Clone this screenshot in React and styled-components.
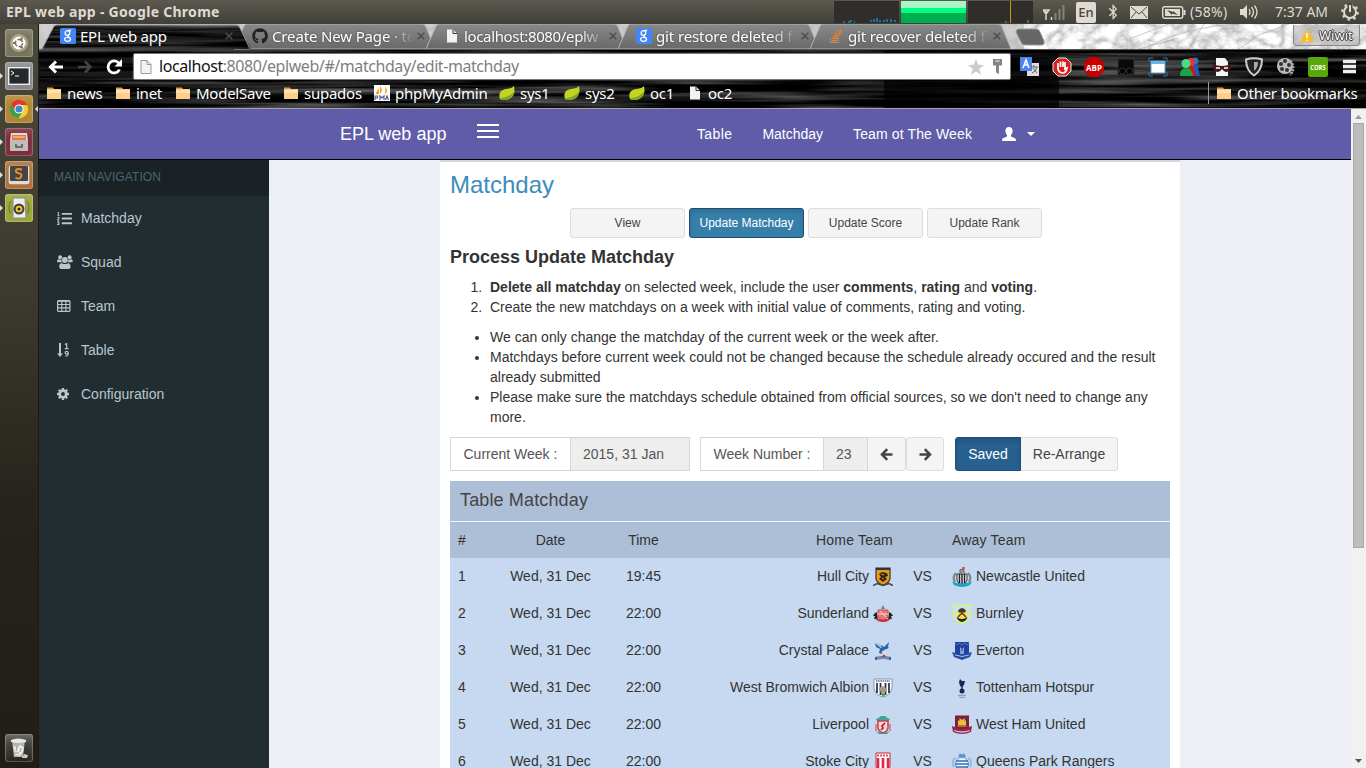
import React from "react";
import styled, { createGlobalStyle, css } from "styled-components";
import { FaListOl, FaGithub, FaBluetoothB } from "react-icons/fa";

const GlobalStyle = createGlobalStyle`
  * { box-sizing: border-box; }
  html, body { margin: 0; height: 100%; overflow: hidden; }
  body { font: 14px/20px "Liberation Sans", Arial, sans-serif; color: #333; }
  svg { display: block; flex: none; }
`;

const uiFont = css`font-family: "Noto Sans", "Open Sans", sans-serif; font-size: 15px; line-height: 20px;`;

const T = styled.span`
  white-space: nowrap;
  letter-spacing: ${(p) => p.$ls || 0}px;
`;

/* ---------- desktop ---------- */
const Desktop = styled.div`
  display: flex; flex-direction: column; width: 1366px; height: 768px; overflow: hidden;
`;
const TopPanel = styled.header`
  ${uiFont}
  height: 24px; display: flex; align-items: center; justify-content: space-between;
  background: linear-gradient(#5c594f, #403f3a); color: #dfdbd2; padding-left: 6px;
`;
const PanelTitle = styled.b`font-size: 14px; font-weight: 700; white-space: nowrap; letter-spacing: ${(p) => p.$ls}px;`;
const Tray = styled.div`display: flex; align-items: center; height: 24px; width: 532px;`;
const Slot = styled.div`
  width: ${(p) => p.$w}px; height: 24px; display: flex; align-items: center; flex: none; font-size: 14px; white-space: nowrap;
  letter-spacing: ${(p) => p.$ls || 0}px; padding-left: ${(p) => p.$pl || 0}px;
`;
const Monitor = styled.div`height: 22px; width: 65px; background: #2f2e2a; margin-right: 2px; flex: none;`;
const LangBox = styled.span`
  background: #dfdbd2; color: #45443e; border-radius: 2px; width: 20px; height: 21px; line-height: 21px; text-align: center; font-size: 13px; font-weight: 500;
`;
const Below = styled.div`display: flex; flex: 1; min-height: 0;`;

const Launcher = styled.aside`
  width: 39px; padding: 5px 0 6px 0; display: flex; flex-direction: column; gap: 5px; flex: none;
  background: linear-gradient(#4a483b, #3d3a30 35%, #26231c 65%, #211e18); border-right: 1px solid #1b1a16;
`;
const LaunchRow = styled.div`
  display: flex; align-items: center; height: 28px; gap: 2px;
  margin-top: ${(p) => (p.$last ? "auto" : 0)};
`;
const Pip = styled.i`
  width: 3px; height: 6px; flex: none; background: ${(p) => (p.$on ? "#ddd" : "transparent")};
  clip-path: ${(p) => (p.$right ? "polygon(100% 0, 0 50%, 100% 100%)" : "polygon(0 0, 100% 50%, 0 100%)")};
`;
const Tile = styled.div`
  width: 28px; height: 28px; border-radius: 3px; flex: none; background: ${(p) => p.$bg};
  box-shadow: inset 0 0 0 1px rgba(255,255,255,.22), inset 0 5px 6px rgba(255,255,255,.15);
  display: flex; align-items: center; justify-content: center;
`;

/* ---------- browser ---------- */
const Browser = styled.main`flex: 1; min-width: 0; display: flex; flex-direction: column;`;
const Chrome = styled.div`position: relative; height: 85px; flex: none; color: #fff; background: #0c0c0c; border-bottom: 1px solid #a3a3a3; ${uiFont}`;
const Backdrop = styled.svg`position: absolute; left: 0; top: 0;`;
const TabStrip = styled.div`position: relative; display: flex; height: 25px; padding-left: 9px; align-items: center;`;
const Tab = styled.div`width: 192px; padding: 0 0 1px 12px; display: flex; align-items: center; height: 25px;`;
const TabIcon = styled.span`width: 20px; display: flex;`;
const TabText = styled.span`
  width: 145px; white-space: nowrap; letter-spacing: ${(p) => p.$ls || 0}px; text-shadow: 0 0 2px rgba(0,0,0,.5);
  ${(p) => p.$fade && css`mask-image: linear-gradient(90deg, #000 115px, transparent 141px);`}
`;
const TabClose = styled.span`width: 8px;`;
const WindowUser = styled.div`
  margin-left: auto; margin-right: 6px; width: 67px; height: 21px; margin-bottom: 2px; border: 1px solid #888; border-top: 0; border-radius: 0 0 4px 4px;
  background: rgba(180,180,180,.6); display: flex; align-items: center; gap: 5px; padding-left: 6px; font-size: 13px;
  text-shadow: 1px 0 #333, -1px 0 #333, 0 1px #333, 0 -1px #333;
`;
const Toolbar = styled.div`position: relative; display: flex; align-items: center; height: 34px; padding: 1px 0 0 9px;`;
const NavIcons = styled.div`display: flex; width: 85px; gap: 13px; flex: none;`;
const Omnibox = styled.div`
  width: 878px; flex: none; height: 27px; background: #fff; border: 1px solid #777; border-radius: 2px; color: #808080;
  display: flex; align-items: center; padding: 0 6px 0 4px; font-size: 16px;
`;
const Url = styled.span`flex: 1; padding: 0 0 1px 5px; white-space: nowrap; letter-spacing: ${(p) => p.$ls}px; b { font-weight: 400; color: #111; }`;
const KeyIcon = styled.svg`margin-left: 8px;`;
const Extensions = styled.div`display: flex; gap: 12px; margin-left: 9px;`;
const Bookmarks = styled.div`position: relative; display: flex; align-items: center; height: 20px; padding-left: 7px; letter-spacing: -0.25px;`;
const Bookmark = styled.div`width: ${(p) => p.$w}px; display: flex; align-items: center; gap: 5px; flex: none;`;
const OtherMarks = styled(Bookmark)`margin-left: auto; border-left: 1px solid #99a; padding-left: 7px; height: 22px;`;

/* ---------- page ---------- */
const Viewport = styled.div`flex: 1; display: flex; min-height: 0;`;
const Page = styled.div`flex: 1; display: flex; flex-direction: column; min-width: 0; background: #ecf0f5;`;
const Navbar = styled.nav`
  height: 51px; flex: none; background: #605ca8; border-bottom: 1px solid #000; color: #fff; display: flex; align-items: center; padding: 0 316px 0 301px;
`;
const Brand = styled.span`font-size: 18px; width: 137px; white-space: nowrap;`;
const Burger = styled.div`width: 22px; display: grid; gap: 4px; margin-top: -6px; i { height: 2px; background: #fff; }`;
const Links = styled.div`display: flex; gap: 30px; margin-left: auto; align-items: center;`;
const UserMenu = styled.div`display: flex; gap: 11px; align-items: center;`;
const Columns = styled.div`display: flex; flex: 1; min-height: 0; overflow: hidden;`;
const Sidebar = styled.aside`width: 230px; background: #222d32; color: #b8c7ce; flex: none;`;
const SideTitle = styled.div`height: 36px; background: #1a2226; color: #4b646f; font-size: 12px; line-height: 34px; padding-left: 15px; letter-spacing: 0.1px;`;
const SideItem = styled.div`height: 44px; display: flex; align-items: center; padding-left: 18px;`;
const SideIcon = styled.span`width: 24px; display: flex;`;
const Content = styled.section`
  margin-left: 171px; width: 740px; height: 640px; background: #fff; border-top: 2px solid #d2d6de; padding: 10px 10px 0;
`;
const Heading = styled.h1`font-size: 24px; line-height: 26px; font-weight: 400; color: #3c8dbc; margin: 0 0 10px;`;
const SubHeading = styled.h2`font-size: 18px; line-height: 20px; margin: 9px 0 10px;`;
const Tabs = styled.div`display: flex; justify-content: center; gap: 4px; padding-right: 8px;`;
const PillButton = styled.button`
  font: 12px "Liberation Sans", Arial, sans-serif; width: 115px; height: 30px; border-radius: 3px; padding: 0; white-space: nowrap;
  background: ${(p) => (p.$active ? "#367fa9" : "#f4f4f4")}; color: ${(p) => (p.$active ? "#fff" : "#444")};
  border: 1px solid ${(p) => (p.$active ? "#204d74" : "#ddd")};
  box-shadow: ${(p) => (p.$active ? "inset 0 3px 5px rgba(0,0,0,.125)" : "none")};
`;
const listStyle = css`margin: 0 0 10px; padding-left: 40px; li { line-height: 20px; }`;
const Steps = styled.ol`
  ${listStyle}
  li::marker { content: counter(list-item) ". \\2009\\200A"; }
`;
const Notes = styled.ul`${listStyle}`;
const Controls = styled.div`display: flex; height: 34px; margin-bottom: 10px;`;
const Group = styled.div`display: flex; margin-right: ${(p) => p.$mr || 0}px;`;
const Cell = styled.div`
  width: ${(p) => p.$w}px; height: 34px; border: 1px solid #d2d6de; margin-left: ${(p) => (p.$first ? 0 : -1)}px;
  background: ${(p) => (p.$muted ? "#eee" : "#fff")}; color: #555; padding-left: ${(p) => (p.$muted ? 12 : 12.5)}px; line-height: 32px; white-space: nowrap;
`;
const Button = styled.button`
  width: ${(p) => p.$w}px; height: 34px; padding: 0; font: 14px "Liberation Sans", Arial, sans-serif; white-space: nowrap;
  display: flex; align-items: center; justify-content: center;
  background: ${(p) => (p.$active ? "#286090" : "#f4f4f4")}; color: ${(p) => (p.$active ? "#fff" : "#444")};
  border: 1px solid ${(p) => (p.$active ? "#204d74" : "#ddd")}; border-radius: ${(p) => p.$r || "3px"};
  border-left-width: ${(p) => (p.$joined ? 0 : 1)}px;
  box-shadow: ${(p) => (p.$active ? "inset 0 3px 5px rgba(0,0,0,.125)" : "none")};
`;
const TableTitle = styled.div`height: 41px; background: #adbfd6; border-bottom: 1px solid #f4f4f4; font-size: 18px; line-height: 38px; padding-left: 10px; color: #444; letter-spacing: 0.14px;`;
const Row = styled.div`
  display: grid; grid-template-columns: 46px 109px 77px 219px 43px 226px; align-items: center; height: ${(p) => (p.$head ? 36 : 37)}px;
  padding-bottom: ${(p) => (p.$head ? 0 : 1)}px; background: ${(p) => (p.$head ? "#adbfd6" : "#c6d9f1")};
`;
const Col = styled.div`
  padding: 0 8px; display: flex; align-items: center; gap: 4px; white-space: nowrap; letter-spacing: ${(p) => p.$ls || 0}px;
  justify-content: ${(p) => (p.$align === "c" ? "center" : p.$align === "r" ? "flex-end" : "flex-start")};
`;
const Crest = styled.svg.attrs({ width: 20, height: 20, viewBox: "0 0 20 20" })`margin-top: 2px;`;
const Scrollbar = styled.div`width: 15px; background: #f1f1f1; display: flex; flex-direction: column; align-items: center; justify-content: space-between;`;
const ScrollTop = styled.div`display: flex; flex-direction: column; align-items: center;`;
const Thumb = styled.div`width: 11px; height: 425px; background: #bcbcbc; border: 1px solid #a8a8a8;`;

/* ---------- icons ---------- */
const GoogleIcon = () => (
  <svg width="16" height="16" viewBox="0 0 16 16"><rect width="16" height="16" rx="1.5" fill="#4285f4" />
    <g fill="none" stroke="#fff" strokeWidth="1.3"><ellipse cx="7.400" cy="5" rx="2.300" ry="2.300" /><path d="M8 2.500h3.200M8.500 7.200c-2 1 .5 1.600 1.500 2.800M7.500 9.300c-3.800 0-4 4 .1 4 3.800 0 4-4 .2-4z" /></g></svg>
);
const PageIcon = ({ line }) => (
  <svg width="16" height="16" viewBox="0 0 16 16"><path d="M3 1.500h6l4 4v9H3z" fill={line ? "#f4f4f4" : "#f2f2f2"} stroke={line ? "#999" : "none"} /><path d="M9 1.500v4h4" fill="none" stroke={line ? "#999" : "#333"} /></svg>
);
const Stack = () => (
  <svg width="16" height="16" viewBox="0 0 16 16" fill="none"><path d="M2.500 10v4.500h8V10" stroke="#999" /><path d="M4 12.500h5M4.200 10l5 .7M5 7.300l5 2.200M6.800 4.500l4 4M9.500 2l2.600 5M12.500 1l.8 5" stroke="#f0802c" strokeWidth="1.300" /></svg>
);
const CloseX = () => <svg width="8" height="8" viewBox="0 0 8 8"><path d="M.7.7l6.600 6.600M7.300.7L.7 7.300" stroke="#4d4d4d" strokeWidth="1.500" /></svg>;
const Folder = () => (
  <svg width="16" height="16" viewBox="0 0 16 16"><path d="M1 4V2.500h6L8 4h7v9H1z" fill="#d89b45" /><path d="M1 4.500h14V14H1z" fill="#fcd08a" /><path d="M1 4.500h14v3.500H1z" fill="#ffe0ae" /></svg>
);
const Leaf = () => <svg width="16" height="16" viewBox="0 0 16 16"><path d="M1 14C-2 5 6 4 10 3.500Q13 3 15 1c2 8-2 15-12 13.500z" fill="#c2d322" /><path d="M1.500 14.500c7 2 12-1 13.500-8C12 10 8 12.500 2 13z" fill="#7ca62a" /></svg>;
const Pma = () => <svg width="16" height="16" viewBox="0 0 16 16"><rect width="16" height="16" fill="#fff" /><path d="M5 9V3l-3.500 6zM6 9c3-3 1.500-6 0-8zM11 9c3-2 2-5 .5-7z" fill="#f89c0e" /><path d="M1 15v-4h2.500v2H1M6 15v-4l2 2 2-2v4M11.500 15l1.500-4 1.500 4" fill="none" stroke="#555b8c" strokeWidth="1.200" /></svg>;

const tabs = [
  ["EPL web app", <GoogleIcon />, -0.25, 0],
  ["Create New Page · te", <FaGithub size={16} color="#222" />, -0.15, 1],
  ["localhost:8080/eplw", <PageIcon />, -0.35, 1],
  ["git restore deleted f", <GoogleIcon />, -0.12, 1],
  ["git recover deleted f", <Stack />, -0.17, 1],
];
const bookmarks = [
  ["news", 69, <Folder />], ["inet", 60, <Folder />], ["ModelSave", 108, <Folder />], ["supados", 91, <Folder />],
  ["phpMyAdmin", 125, <Pma />], ["sys1", 65, <Leaf />], ["sys2", 65, <Leaf />], ["oc1", 58, <Leaf />], ["oc2", 60, <PageIcon />],
];

const ChromeBackdrop = () => (
  <Backdrop width="1327" height="84" viewBox="0 0 1327 84">
    <defs>
      <filter id="grain" x="0" y="0" width="100%" height="100%" colorInterpolationFilters="sRGB">
        <feTurbulence type="fractalNoise" baseFrequency="0.005 0.17" numOctaves="3" seed="8" />
        <feColorMatrix values=".85 0 0 0 -.33  .85 0 0 0 -.33  .85 0 0 0 -.33  0 0 0 0 1" />
      </filter>
      <filter id="branches" x="0" y="0" width="100%" height="100%">
        <feTurbulence type="turbulence" baseFrequency="0.045 0.06" numOctaves="4" seed="5" />
        <feColorMatrix values="1.200 0 0 0 .45  1.200 0 0 0 .45  1.200 0 0 0 .45  0 0 0 0 1" />
      </filter>
      <linearGradient id="tabFill" x2="0" y2="1"><stop stopColor="#858585" stopOpacity=".94" /><stop offset="1" stopColor="#666" stopOpacity=".97" /></linearGradient>
      <clipPath id="active"><path d="M3 25 L14 4 q1 -3 4 -3 H197 q3 0 4 3 L212 25z" /></clipPath>
    </defs>
    <rect width="1327" height="84" filter="url(#grain)" />
    <rect width="1327" height="25" filter="url(#branches)" />
    <rect width="985" height="25" fill="#bbb" opacity=".7" />
    {[195, 387, 579, 771].map((x) => (
      <path key={x} d={`M${x} 25 L${x + 10} 2 q1 -2 3 -2 H${x + 188} q3 0 4 3 L${x + 201} 25z`} fill="url(#tabFill)" stroke="#b5b5b5" />
    ))}
    <g clipPath="url(#active)"><rect width="1327" height="84" filter="url(#grain)" /></g>
    <path d="M0 25H3L14 4q1-3 4-3H197q3 0 4 3L211 25" fill="none" stroke="#999" />
    <path d="M211 25.500H1327" stroke="#555" />
    <path d="M977 8q0-3 3-3h17q3 0 4 3l4 9q1 4-2 4h-17q-3 0-4-3z" fill="#666" stroke="#999" />
    <path d="M845 26h175v58H845z" fill="#000" opacity=".7" />
    <path d="M0 28h93v26H0z" fill="#000" opacity=".5" />
    <path d="M1090 15l40-15M1110 22q40-20 90-22M1150 25l15-25M1140 14l-40 11M1200 25l20-14 30-11" stroke="#999" fill="none" opacity=".5" />
  </Backdrop>
);

const S = ({ children, s = 20 }) => <svg width={s} height={s} viewBox="0 0 20 20">{children}</svg>;
const extensions = [
  <S key="tr"><rect x="7" y="6" width="12" height="13" fill="#ddd" /><path d="M0 0h12v14H0z" fill="#4a86ee" /><path d="M3 11l3-8 3 8M4 8h4" stroke="#fff" strokeWidth="1.500" fill="none" /><path d="M11 10h7M14 8v2M12 16q4-1 5-6M13 11l4 5" stroke="#666" fill="none" /></S>,
  <S key="hand"><path d="M6 1h8l5 5v8l-5 5H6l-5-5V6z" fill="#d8201f" stroke="#eee" /><path d="M6 8v4q1 4 5 4 3 0 4-5l-2 1V5M6 9V6M8.500 10V4.500M11 10V4.500M13 10V6" stroke="#fff" strokeWidth="1.700" fill="none" /></S>,
  <S key="abp"><path d="M6 0h8l6 6v8l-6 6H6l-6-6V6z" fill="#c80000" /><text x="10" y="13.500" textAnchor="middle" fill="#fff" fontSize="8.500" fontWeight="700" fontFamily="Open Sans, sans-serif" textLength="16" lengthAdjust="spacingAndGlyphs">ABP</text></S>,
  <S key="dark"><path d="M2 2h16v16H2z" fill="#090909" stroke="#333" /><circle cx="6.500" cy="14" r="3" fill="#000" stroke="#333" /><circle cx="13.500" cy="14" r="3" fill="#000" stroke="#333" /></S>,
  <S key="frame"><path d="M1 5V1h4M15 1h4v4M1 15v4h4M15 19h4v-4" stroke="#38709c" fill="none" /><rect x="3" y="4" width="14" height="12" fill="#fff" stroke="#55a1dc" /><path d="M3 4h14v3H3z" fill="#6db3e8" /></S>,
  <S key="people"><circle cx="15" cy="4" r="3.500" fill="#1a79c9" /><path d="M12 8h6q0 5 2 11h-7z" fill="#175dc4" /><circle cx="11" cy="5" r="4" fill="#e33" /><path d="M8 9h6q0 5 3 10H9z" fill="#c81c1c" /><circle cx="6" cy="6.500" r="4.500" fill="#4d8" /><path d="M0 19q0-8 6-8t7 8z" fill="#1ba347" /></S>,
  <S key="mask"><path d="M4 1h9l3 4v14H4z" fill="#f4f4f4" /><path d="M1 7q4 2 9 2t9-2q0 8-5 8-2 0-4-3-2 3-4 3-5 0-5-8z" fill="#47181b" /><path d="M4 11h4M12 11h4" stroke="#fff" strokeWidth="1.500" /></S>,
  <S key="shield"><path d="M2 2.500q8-2.500 16 0 0 11-8 16-8-5-8-16z" fill="#222" stroke="#ccc" strokeWidth="2" /><path d="M10 5h4q0 6-4 9z" fill="#aaa" /></S>,
  <S key="reel"><circle cx="9" cy="9" r="8" fill="#bbb" /><path d="M14 4q6 6 0 14" stroke="#aaa" fill="none" strokeWidth="3" strokeDasharray="2 1" />{[[9, 4], [5, 7], [6, 12], [11, 13], [13, 8]].map(([x, y]) => <circle key={x} cx={x} cy={y} r="2" fill="#333" />)}</S>,
  <S key="cors"><rect width="20" height="20" rx="2" fill="#57a808" /><text x="2.200" y="13" fill="#fff" fontSize="7" fontWeight="700" fontFamily="Open Sans, sans-serif" textLength="15.500" lengthAdjust="spacingAndGlyphs">CORS</text></S>,
  <S key="menu"><path d="M3 4.500h13M3 9.500h13M3 14.500h13" stroke="#eee" strokeWidth="3.400" /></S>,
];

const Speaker = () => <svg width="20" height="16" viewBox="0 0 20 16"><path d="M0 5h3l4-4v14l-4-4H0z" fill="#dfdbd2" /><path d="M9 5q2 3 0 6M11.500 3q4 5 0 10M14.500 1.500q5 6.500 0 13" fill="none" stroke="#dfdbd2" strokeWidth="1.300" /></svg>;

const launcher = [
  ["#77735c", 0, <svg width="22" height="22" viewBox="0 0 22 22"><circle cx="11" cy="11" r="9" fill="#aaa68e" /><circle cx="11" cy="11" r="6.500" fill="#fff" /><circle cx="11" cy="11" r="3.600" fill="none" stroke="#77735c" strokeWidth="1.500" strokeDasharray="6 1.500" /><circle cx="6" cy="11" r="1.300" fill="#77735c" /><circle cx="13.500" cy="6.700" r="1.300" fill="#77735c" /><circle cx="13.500" cy="15.300" r="1.300" fill="#77735c" /></svg>],
  ["#898989", 1, <svg width="22" height="18" viewBox="0 0 22 18"><rect x=".7" y=".7" width="20.600" height="16.600" fill="#242a2b" stroke="#eee" strokeWidth="1.400" /><path d="M3 4l3 2-3 2M7 9h4" stroke="#fff" fill="none" /></svg>],
  ["#b08634", 2, <svg width="20" height="20" viewBox="0 0 20 20"><circle cx="10" cy="10" r="9.200" fill="#f4cf34" /><path d="M2 5.400A9.200 9.200 0 0 1 18.200 6H10L6 12z" fill="#e3392c" /><path d="M2 5.400A9.200 9.200 0 0 0 9.500 19.200L13.500 12.500 6 12z" fill="#37a247" /><circle cx="10" cy="10" r="4.600" fill="#fff" /><circle cx="10" cy="10" r="3.600" fill="#4285c8" /></svg>],
  ["#7d2b38", 1, <svg width="20" height="20" viewBox="0 0 20 20"><path d="M2 1h16l1 8H1z" fill="#ddd" /><path d="M3 3h14v5H3z" fill="#e27a3f" /><path d="M4 5h12" stroke="#ffd5a6" /><path d="M1 8h18v11H1z" fill="#bdbdbd" /><path d="M7 12v3h6v-3" fill="none" stroke="#555" strokeWidth="1.500" /></svg>],
  ["#b0703a", 1, <svg width="22" height="20" viewBox="0 0 22 20"><rect x=".7" y=".7" width="20.600" height="18.600" rx="2" fill="#ddd" /><rect x="2" y="1" width="18" height="15" rx="1" fill="#454545" /><path d="M14 4.500q-5.500-1.500-6 .8t3 3 2 3.700-5.500.5" stroke="#e78d35" strokeWidth="2" fill="none" /></svg>],
  ["#9ba536", 1, <svg width="24" height="24" viewBox="0 0 24 24"><path d="M4 5q-4 7 0 13M20 5q4 7 0 13" stroke="#667a25" fill="none" /><path d="M6 2h12l1 20H6z" fill="#eee" stroke="#888" /><circle cx="12" cy="13" r="5.500" fill="#444" /><circle cx="12" cy="13" r="3.300" fill="#f3cf32" /><circle cx="12" cy="13" r="1.500" fill="#222" /></svg>],
  ["linear-gradient(#55524c,#26241f)", 0, <svg width="20" height="22" viewBox="0 0 20 22"><path d="M3 3h13l-2 17H5z" fill="#b4b5b0" /><path d="M2 3q7-3 15 0v2q-8 2-15 0z" fill="#e7e8ea" /><path d="M4 8l4 3 3-3 4 2-1 5-3 4-5-1z" fill="#e8e8e4" /><path d="M8 10l-1 4M12 11l-1 4M5 16h5" stroke="#9a9a92" /><path d="M15 17l4 1-1 3h-5z" fill="#ccc" /></svg>],
];

const TableIcon = () => <svg width="14" height="14" viewBox="0 0 14 14"><rect x=".6" y="1.600" width="12.300" height="10.800" rx="1" fill="none" stroke="#b8c7ce" strokeWidth="1.200" /><path d="M.6 2.200h12.300M.6 5.500h12.300M.6 8.900h12.300M4.800 2v10M8.900 2v10" stroke="#b8c7ce" strokeWidth="1.100" /></svg>;
const UsersIcon = () => (
  <svg width="16" height="14" viewBox="0 0 16 14" fill="#b8c7ce"><circle cx="3.200" cy="2.200" r="2" /><circle cx="12.600" cy="2.200" r="2" /><path d="M0 6.500Q0 4 2 4.200q1.500.8 2.600.2Q4.300 6 5 7.200H1.200Q0 7.200 0 6.500zM15.800 6.500q0-2.500-2-2.300-1.500.8-2.600.2.300 1.600-.4 2.800h3.800q1.200 0 1.200-.7z" /><circle cx="7.900" cy="5" r="2.900" /><path d="M2.200 12Q2.200 7.800 5 8.200q3 1.700 5.800 0 2.800-.4 2.800 3.800 0 2-2 2H4.200q-2 0-2-2z" /></svg>
);
const SortIcon = () => (
  <svg width="14" height="14" viewBox="0 0 14 14"><path d="M3 0v11" stroke="#b8c7ce" strokeWidth="2" /><path d="M0 10.500h6L3 14z" fill="#b8c7ce" /><path d="M7.800 1.500L9.700.6V5.500M7.800 5.600h3.800" stroke="#b8c7ce" strokeWidth="1.200" fill="none" /><ellipse cx="9.600" cy="9.700" rx="1.500" ry="1.300" fill="none" stroke="#b8c7ce" strokeWidth="1.200" /><path d="M11.200 9.700q.1 3.300-2.900 3.500" fill="none" stroke="#b8c7ce" strokeWidth="1.200" /></svg>
);
const GearIcon = () => (
  <svg width="12" height="12" viewBox="0 0 12 12" fill="none" stroke="#b8c7ce"><circle cx="6" cy="6" r="3.300" strokeWidth="2.800" /><path d="M6 0v2M6 10v2M0 6h2M10 6h2M1.800 1.800l1.400 1.400M8.800 8.800l1.400 1.400M10.200 1.800L8.800 3.200M1.800 10.200l1.400-1.400" strokeWidth="2.300" /></svg>
);
const Arrow = ({ right }) => (
  <svg width="13" height="13" viewBox="0 0 13 13"><path d={right ? "M.5 6.500H10M5.800 1.200L11 6.500 5.800 11.800" : "M12.500 6.500H3M7.200 1.200L2 6.500 7.200 11.800"} fill="none" stroke="#444" strokeWidth="2.500" /></svg>
);
const menu = [
  ["Matchday", <FaListOl size={15} />], ["Squad", <UsersIcon />], ["Team", <TableIcon />], ["Table", <SortIcon />], ["Configuration", <GearIcon />],
];

const crests = {
  hull: <><path d="M3 1h14v11q-2 5-7 6-5-1-7-6z" fill="#e69b20" stroke="#333" strokeWidth="1.200" /><path d="M3 2h14" stroke="#333" strokeWidth="2" /><path d="M6 7l3-2 5 1 1 3-3 1 2 2-4 3-4-3 2-2z" fill="#33240f" /><path d="M8 7l3 1M9 11l2 1" stroke="#e69b20" /><path d="M0 18.500l4-2 6 2 6-2 4 2" stroke="#444" fill="none" strokeWidth="1.500" /></>,
  newcastle: <><path d="M5 7h10v6q-1 4-5 5-4-1-5-5z" fill="#eee" stroke="#333" /><path d="M7.500 7v9M10 7v10M12.500 7v9" stroke="#222" strokeWidth="1.400" /><path d="M8 6V2.500h4V6" fill="#999" stroke="#666" /><path d="M10 1h3" stroke="#d33" strokeWidth="1.500" /><path d="M4 6q-4 4-1 9M16 6q4 4 1 9" fill="none" stroke="#7b858d" strokeWidth="2.200" /><path d="M0 14.500q10 4 20 0l-2 3.500q-8 4-16 0z" fill="#19a4bf" /></>,
  sunderland: <><path d="M5 6h10v7q-2 3-5 4-3-1-5-4z" fill="#e8767a" stroke="#b55" /><path d="M7 7l6 6M5 10h10" stroke="#f8d6d0" /><path d="M8 5l2-4 2 4" fill="#976" /><path d="M4 8q-3 1-4 4h2l-1 3h4l-1-4zM16 8q3 1 4 4h-2l1 3h-4l1-4z" fill="#222" /><path d="M2 14q8 3 16 0-2 4-8 4t-8-4z" fill="#c3323c" /></>,
  burnley: <><path d="M1.500.5h17v14q-2 4-8.500 5-6.500-1-8.500-5z" fill="#c2e6ea" stroke="#f0ed43" /><path d="M5 7h10v6q-1 4-5 5-4-1-5-5z" fill="#f3e436" /><path d="M6 6.500q4-5 8 0l-1 2H7z" fill="#443524" /><path d="M6 13l4-4 4 4" stroke="#6c2033" fill="none" strokeWidth="1.400" /><path d="M4.500 13q5.500 4 11 0-1 4-5.500 5-4.500-1-5.500-5z" fill="#222" /><path d="M7 13h6l-3 2z" fill="#f3e436" /></>,
  palace: <><path d="M2 2l6 5V4l3 2 5-5-1 5 1 1-5 2-2 4-3-1 1-4-4-2z" fill="#2c65a5" /><path d="M5 2l4 5" stroke="#8fb0d6" /><path d="M10 10l2 5" stroke="#ddd" strokeWidth="3" /><circle cx="11" cy="15" r="1.500" fill="#dd3a44" /><path d="M2 16q8-1.500 16 0v3q-8-2-16 0z" fill="#335e9e" /><path d="M4 17h12" stroke="#e9a3a8" /></>,
  everton: <><path d="M3 1h14v12q-2 4-7 6-5-2-7-6z" fill="#22409a" /><path d="M8 6h4v7H8z" fill="#8ca0dc" /><path d="M9 6h2v1H9zM9 9h2" stroke="#22409a" /><path d="M3 2l2 2 2-2 3 2 3-2 2 2 2-2" stroke="#5672c6" fill="none" /><path d="M0 11q10 4 20 0l-2 5q-8 4-16 0z" fill="#274aa8" /><path d="M3 14q7 3 14 0" stroke="#a9b8e6" fill="none" /></>,
  albion: <><path d="M1 1h18v9q-1 7-9 9-8-2-9-9z" fill="#fff" stroke="#8a96a0" /><path d="M4 5v10M7.500 5v12M12.500 5v12M16 5v10" stroke="#1c2c56" strokeWidth="1.700" /><path d="M3 3h14" stroke="#667" strokeDasharray="1.500 .7" strokeWidth="1.500" /><path d="M6 10l4-2 3 2 1 3-4 2-3-2z" fill="#b29478" /><path d="M7 14l6 2-3 3z" fill="#3b9d5f" /></>,
  spurs: <><path d="M8 1l2 2 3 0-1 4-2 2-2-1-1-4z" fill="#192757" /><path d="M10 8v4" stroke="#192757" strokeWidth="1.500" /><circle cx="10" cy="13" r="2.500" fill="#192757" /><path d="M6 17.300h8M7 19.300h6" stroke="#8993ad" /></>,
  liverpool: <><path d="M3 4q3-1 5-3h4q2 2 5 3l-2 3H5z" fill="#46a291" /><path d="M5 6h10v7q-1 4-5 5-4-1-5-5z" fill="#f1d9d8" stroke="#c8404e" strokeWidth="1.500" /><path d="M12 8l-3 3 1 2-2 2" stroke="#c6182f" strokeWidth="1.700" fill="none" /><path d="M3 9v7M17 9v7" stroke="#d8707a" strokeWidth="1.500" /><path d="M3 16q7 4 14 0l-3 3H6z" fill="#2d9c8c" /></>,
  westham: <><path d="M3 .5h14v12q-2 4-7 5-5-1-7-5z" fill="#78203c" /><path d="M6 10V5l1.500 1V3L10 5l2.500-2v3L14 5v5z" fill="#efbd36" /><path d="M5.500 11h9" stroke="#efbd36" /><path d="M0 11l3 1q7 4 14 0l3-1-1 6q-9 4-18 0z" fill="#9c2146" /><path d="M2 15.500q8 3 16 0" stroke="#b7c9e6" fill="none" strokeWidth="1.300" /></>,
  stoke: <><path d="M3 1h14v14q-2 4-7 5-5-1-7-5z" fill="#fff" stroke="#c9253a" /><path d="M5 6v12M10 6v12M15 6v12" stroke="#dc2942" strokeWidth="2.600" /><path d="M4 3.500h12" stroke="#d55" strokeDasharray="2 1" strokeWidth="2" /></>,
  qpr: <><circle cx="10" cy="12" r="6.500" fill="#f3f7fc" stroke="#5b93cf" /><path d="M4 9h12M3.500 12h13M4 15h12" stroke="#2e6cbb" strokeWidth="1.400" /><path d="M6 5l2-4 2 2 2-2 2 4z" fill="#5b91c9" /><path d="M4 6q-5 2-2 9M16 6q5 2 2 9" stroke="#9db9d8" fill="none" strokeWidth="2" /></>,
};
const matches = [
  ["19:45", "Hull City", "hull", "Newcastle United", "newcastle"],
  ["22:00", "Sunderland", "sunderland", "Burnley", "burnley"],
  ["22:00", "Crystal Palace", "palace", "Everton", "everton"],
  ["22:00", "West Bromwich Albion", "albion", "Tottenham Hotspur", "spurs"],
  ["22:00", "Liverpool", "liverpool", "West Ham United", "westham"],
  ["22:00", "Stoke City", "stoke", "Queens Park Rangers", "qpr"],
];

export default function App() {
  return (
    <Desktop>
      <GlobalStyle />
      <TopPanel>
        <PanelTitle $ls={0.28}>EPL web app - Google Chrome</PanelTitle>
        <Tray>
          <Monitor><svg width="65" height="22"><path d="M9 21h2M14 21h2M17 21v-2M20 21h1M37 21v-2M40 21v-3M43 21v-4M46 21v-2M50 21v-2M53 21v-3M57 21v-3M61 21v-2" stroke="#1c86c8" strokeWidth="1.500" /></svg></Monitor>
          <Monitor><svg width="65" height="22"><path d="M0 0h65v22H0z" fill="#00b050" /><path d="M0 0h65v7H0z" fill="#a6f6c8" /><path d="M0 7h65v5H0z" fill="#00ff80" /></svg></Monitor>
          <Monitor><svg width="65" height="22"><path d="M42.500 0v22M38 20v2M60 19v3" stroke="#c89a10" /></svg></Monitor>
          <Slot $w={41} $pl={8}><svg width="22" height="18" viewBox="0 0 22 18"><path d="M0 7h6l-3 4zM3 8v9M8.500 17v-3" stroke="#dfdbd2" strokeWidth="1.500" fill="none" /><path d="M12.500 17v-7M16.500 17V6M20.500 17V2" stroke="#858279" strokeWidth="2" /></svg></Slot>
          <Slot $w={29}><LangBox>En</LangBox></Slot>
          <Slot $w={25}><FaBluetoothB size={16} /></Slot>
          <Slot $w={32}><svg width="18" height="13" viewBox="0 0 18 13"><path d="M0 0h18v13H0z" fill="#dfdbd2" /><path d="M1 1l8 7 8-7M1 12l5-6M17 12l-5-6" stroke="#4c4a43" fill="none" /></svg></Slot>
          <Slot $w={28}><svg width="24" height="13" viewBox="0 0 24 13"><rect x=".7" y=".7" width="20" height="11.600" rx="2" fill="none" stroke="#dfdbd2" strokeWidth="1.400" /><path d="M22.500 4v5" stroke="#dfdbd2" strokeWidth="2" /><path d="M3 3h15v7H3z" fill="#dfdbd2" /><path d="M5 4l6 2v-1l5 4-6-1.500V9z" fill="#46443e" /></svg></Slot>
          <Slot $w={50} $ls={0.3}>(58%)</Slot>
          <Slot $w={35}><Speaker /></Slot>
          <Slot $w={66}>7:37 AM</Slot>
          <svg width="18" height="18" viewBox="0 0 18 18"><circle cx="9" cy="9" r="6" fill="none" stroke="#dfdbd2" strokeWidth="2" /><circle cx="9" cy="9" r="7.800" fill="none" stroke="#dfdbd2" strokeWidth="2" strokeDasharray="2.500 3.620" /><path d="M9 0v9" stroke="#4c4a43" strokeWidth="5" /><path d="M9 2v7" stroke="#dfdbd2" strokeWidth="2" /></svg>
        </Tray>
      </TopPanel>
      <Below>
        <Launcher>
          {launcher.map(([bg, pips, icon], i) => (
            <LaunchRow key={i} $last={i === 6}>
              <Pip $on={pips > 0} /><Tile $bg={bg}>{icon}</Tile><Pip $right $on={pips > 1} />
            </LaunchRow>
          ))}
        </Launcher>
        <Browser>
          <Chrome>
            <ChromeBackdrop />
            <TabStrip>
              {tabs.map(([label, icon, ls, fade]) => (
                <Tab key={label}><TabIcon>{icon}</TabIcon><TabText $ls={ls} $fade={fade}>{label}</TabText><TabClose><CloseX /></TabClose></Tab>
              ))}
              <WindowUser><svg width="14" height="13" viewBox="0 0 14 13"><path d="M7 0l7 13H0z" fill="#fdbc22" /><path d="M7 4v5M7 10.500v1.500" stroke="#fff" strokeWidth="1.500" /></svg>Wiwit</WindowUser>
            </TabStrip>
            <Toolbar>
              <NavIcons>
                <svg width="16" height="16" viewBox="0 0 16 16"><path d="M15 8H3M8 2.500L2.500 8 8 13.500" fill="none" stroke="#fff" strokeWidth="3" /></svg>
                <svg width="16" height="16" viewBox="0 0 16 16"><path d="M1 8h12M8 2.500L13.500 8 8 13.500" fill="none" stroke="#444" strokeWidth="2.500" /></svg>
                <svg width="17" height="16" viewBox="0 0 17 16"><path d="M13.500 10.500A6 6 0 1 1 13 4.500" fill="none" stroke="#fff" strokeWidth="2.800" /><path d="M16 0v7.500H8.500z" fill="#fff" /></svg>
              </NavIcons>
              <Omnibox>
                <PageIcon line />
                <Url $ls={-0.43}><b>localhost</b>:8080/eplweb/#/matchday/edit-matchday</Url>
                <svg width="16" height="16" viewBox="0 0 16 16"><path d="M8 0l2.200 5.800 5.800.2-4.600 3.800L13 16l-5-3.600L3 16l1.600-6.200L0 6l5.800-.2z" fill="#ccc" /></svg>
                <KeyIcon width="12" height="16" viewBox="0 0 12 16"><path d="M1 0h9v6.500H7V15l-3-1.500v-7H1z" fill="#858585" /><path d="M3.500 2h4" stroke="#fff" /></KeyIcon>
              </Omnibox>
              <Extensions>{extensions}</Extensions>
            </Toolbar>
            <Bookmarks>
              {bookmarks.map(([label, w, icon]) => <Bookmark key={label} $w={w}>{icon}<span>{label}</span></Bookmark>)}
              <OtherMarks $w={158}><Folder /><T $ls={-0.25}>Other bookmarks</T></OtherMarks>
            </Bookmarks>
          </Chrome>
          <Viewport>
            <Page>
              <Navbar>
                <Brand>EPL web app</Brand>
                <Burger><i /><i /><i /></Burger>
                <Links>
                  <T $ls={0.4}>Table</T><T>Matchday</T><T $ls={0.12}>Team ot The Week</T>
                  <UserMenu>
                    <svg width="14" height="14" viewBox="0 0 14 14"><path d="M7 0c2.300 0 3.600 1.500 3.600 3.800 0 1.900-.8 3.300-1.600 4.200v1.400l4.200 1.800q.8.400.8 2.800H0q0-2.400.8-2.800L5 9.400V8C4.200 7.100 3.400 5.700 3.400 3.800 3.400 1.500 4.700 0 7 0z" fill="#fff" /></svg>
                    <svg width="8" height="4" viewBox="0 0 8 4"><path d="M0 0h8L4 4z" fill="#fff" /></svg>
                  </UserMenu>
                </Links>
              </Navbar>
              <Columns>
                <Sidebar>
                  <SideTitle>MAIN NAVIGATION</SideTitle>
                  {menu.map(([label, icon]) => <SideItem key={label}><SideIcon>{icon}</SideIcon><T>{label}</T></SideItem>)}
                </Sidebar>
                <Content>
                  <Heading>Matchday</Heading>
                  <Tabs>
                    <PillButton>View</PillButton>
                    <PillButton $active>Update Matchday</PillButton>
                    <PillButton>Update Score</PillButton>
                    <PillButton>Update Rank</PillButton>
                  </Tabs>
                  <SubHeading>Process Update Matchday</SubHeading>
                  <Steps>
                    <li><b>Delete all matchday</b> on selected week, include the user <b>comments</b>, <b>rating</b> and <b>voting</b>.</li>
                    <li>Create the new matchdays on a week with initial value of comments, rating and voting.</li>
                  </Steps>
                  <Notes>
                    <li>We can only change the matchday of the current week or the week after.</li>
                    <li>Matchdays before current week could not be changed because the schedule already occured and the result already submitted</li>
                    <li>Please make sure the matchdays schedule obtained from official sources, so we don't need to change any more.</li>
                  </Notes>
                  <Controls>
                    <Group $mr={10}><Cell $first $w={121}>Current Week :</Cell><Cell $muted $w={120}>2015, 31 Jan</Cell></Group>
                    <Group $mr={11}>
                      <Cell $first $w={124}>Week Number :</Cell><Cell $muted $w={45}>23</Cell>
                      <Button $w={38} $r="0 3px 3px 0" $joined><Arrow /></Button><Button $w={38}><Arrow right /></Button>
                    </Group>
                    <Group><Button $active $w={66} $r="3px 0 0 3px">Saved</Button><Button $w={97} $r="0 3px 3px 0" $joined>Re-Arrange</Button></Group>
                  </Controls>
                  <TableTitle>Table Matchday</TableTitle>
                  <Row $head><Col>#</Col><Col $align="c">Date</Col><Col $align="c">Time</Col><Col $align="r" $ls={0.2}>Home Team</Col><Col /><Col $ls={0.2}>Away Team</Col></Row>
                  {matches.map(([time, home, hc, away, ac], i) => (
                    <Row key={home}>
                      <Col>{i + 1}</Col><Col $align="c">Wed, 31 Dec</Col><Col $align="c">{time}</Col>
                      <Col $align="r">{home}<Crest>{crests[hc]}</Crest></Col><Col $align="c">VS</Col><Col><Crest>{crests[ac]}</Crest>{away}</Col>
                    </Row>
                  ))}
                </Content>
              </Columns>
            </Page>
            <Scrollbar>
              <ScrollTop>
                <svg width="15" height="14" viewBox="0 0 15 14"><path d="M4 10l3.500-4L11 10z" fill="#999" /></svg>
                <Thumb />
              </ScrollTop>
              <svg width="15" height="14" viewBox="0 0 15 14"><path d="M4 5l3.500 4L11 5z" fill="#555" /></svg>
            </Scrollbar>
          </Viewport>
        </Browser>
      </Below>
    </Desktop>
  );
}
